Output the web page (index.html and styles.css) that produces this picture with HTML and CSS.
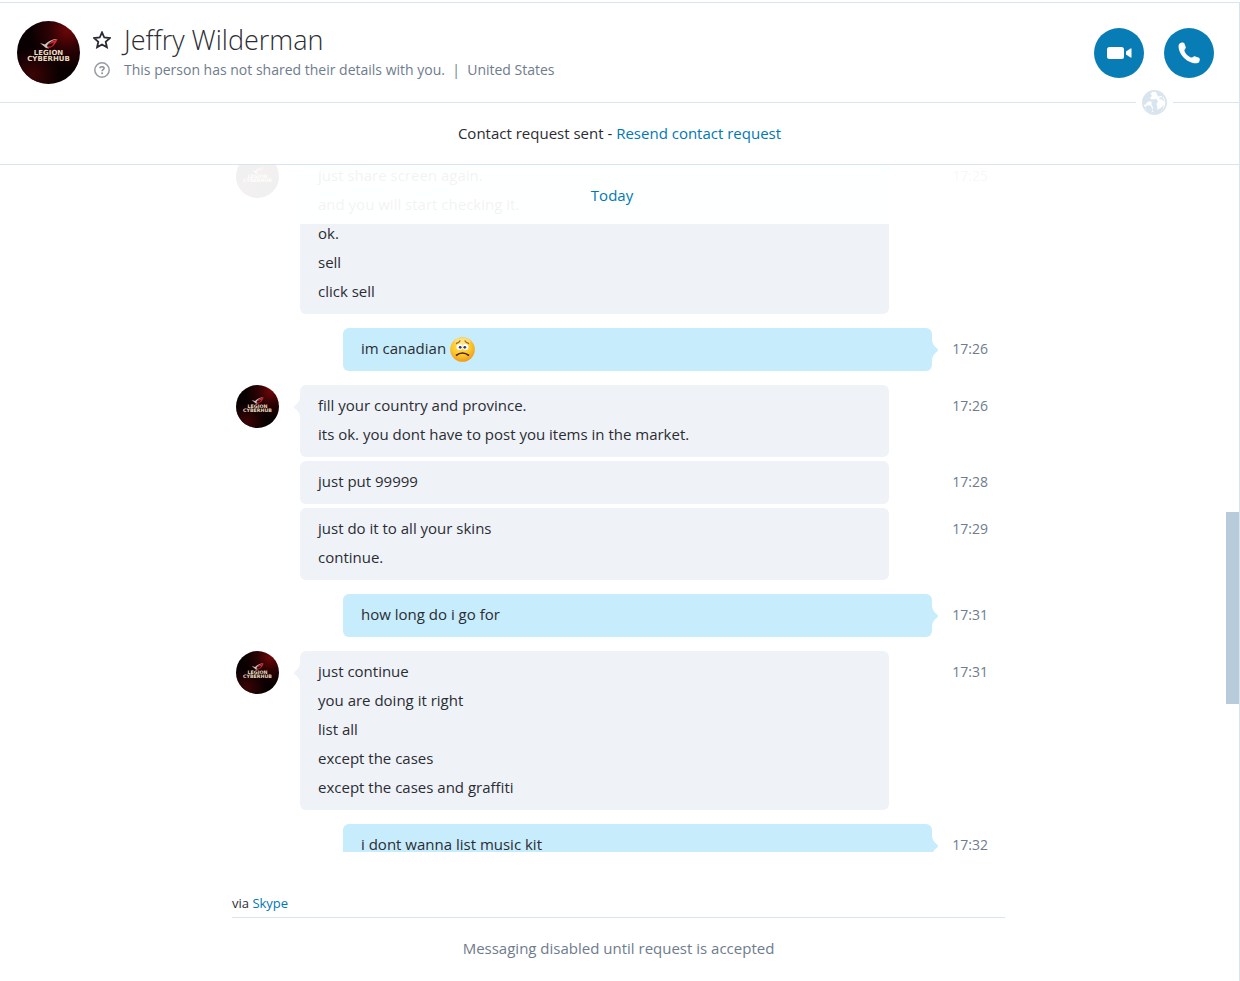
FILE: index.html
```
<!DOCTYPE html>
<html lang="en">
<head>
<meta charset="utf-8">
<title>Jeffry Wilderman</title>
<link rel="stylesheet" href="styles.css">
</head>
<body>
<svg class="defs" aria-hidden="true">
  <defs>
    <radialGradient id="glow" cx="0.8" cy="0.15" r="0.6">
      <stop offset="0" stop-color="#6e0608"/>
      <stop offset="0.5" stop-color="#2c0204"/>
      <stop offset="1" stop-color="#080001"/>
    </radialGradient>
    <radialGradient id="glow-low" cx="0.25" cy="0.85" r="0.45">
      <stop offset="0" stop-color="#3c0405"/>
      <stop offset="1" stop-color="#3c0405" stop-opacity="0"/>
    </radialGradient>
    <radialGradient id="face" cx="0.45" cy="0.35" r="0.65">
      <stop offset="0" stop-color="#ffe35a"/>
      <stop offset="0.6" stop-color="#fdc62c"/>
      <stop offset="1" stop-color="#f09a1c"/>
    </radialGradient>
  </defs>
  <symbol id="logo" viewBox="0 0 63 63">
    <circle cx="31.500" cy="31.500" r="31.500" fill="url(#glow)"/>
    <circle cx="31.500" cy="31.500" r="31.500" fill="url(#glow-low)"/>
    <path d="M23 22l6 5 3 .5-2-2.500C32 21 36 19 41 18c-5 0-10 2-13 5.500z" fill="#c9c4c4"/>
    <path d="M31 24c2-3 6-5 9.500-5.500C38 23 36 27 31 27l-1-1.500h4c1.500-1 2.500-2.500 3-4-2 .5-4 1.500-6 2.500z" fill="#d8262c"/>
    <text x="31.500" y="34" class="logo-text">LEGION</text>
    <text x="31.500" y="40" class="logo-text">CYBERHUB</text>
  </symbol>
  <symbol id="tail" viewBox="0 0 6 20">
    <path d="M0 0Q.5 5 4 7.500Q6 9 6 10Q6 11 4 12.500Q.5 15 0 20z" fill="currentColor"/>
  </symbol>
</svg>

<div class="app">
  <header class="header">
    <svg class="avatar avatar-large" role="img" aria-label="Profile picture"><use href="#logo"/></svg>
    <div class="person">
      <button class="icon-button" aria-label="Add to favourites">
        <svg width="18" height="18" viewBox="0 0 18 18"><path d="M9 1.400l2.300 5.100 5.500.6-4.100 3.700 1.200 5.500L9 13.500l-4.900 2.800 1.200-5.500L1.200 7.100l5.500-.6z" fill="none" stroke="#2b2c33" stroke-width="1.800"/></svg>
      </button>
      <h1 class="name">Jeffry Wilderman</h1>
      <svg class="help" width="18" height="18" viewBox="0 0 18 18" aria-hidden="true"><circle cx="9" cy="9" r="7.200" fill="none" stroke="#959ca3" stroke-width="1.500"/><path d="M6.900 7.300C7 5.100 11.100 5.200 11.100 7.200 11.100 8.600 9.100 8.600 9.100 10.200" fill="none" stroke="#8a9198" stroke-width="1.500"/><circle cx="9.100" cy="12.200" r="1" fill="#8a9198"/></svg>
      <p class="status">This person has not shared their details with you.&nbsp; |&nbsp; United States</p>
    </div>
    <div class="calls">
      <button class="call" aria-label="Video call">
        <svg width="26" height="14" viewBox="0 0 26 14"><rect x="1" y="1" width="17" height="12" rx="2.500" fill="#fff"/><path d="M20 5.500L24.500 2.500Q25.500 2 25.500 3v8q0 1-1 .5L20 8.500z" fill="#fff"/></svg>
      </button>
      <button class="call" aria-label="Call">
        <svg width="22" height="22" viewBox="0 0 22 22"><path d="M1 2.200C2 .5 5.500-.1 6.300 1.200L7.800 5.300C8 6.500 6.300 7.600 6.400 8.700 7.300 11.500 10.500 14.700 13.300 15.600 14.500 15.700 15.500 14 16.700 14.300L21 15.700C22.300 16.300 21.800 18.800 21 20.200 20 21.500 17 21.700 14 20.800 7.500 18.500 3 13.500 1.200 8.200.5 6 .3 3.700 1 2.200z" fill="#fff"/></svg>
      </button>
    </div>
    <span class="globe">
      <svg width="25" height="25" viewBox="0 0 25 25" aria-hidden="true"><circle cx="12.500" cy="12.500" r="11.600" fill="#fff" stroke="#d8e5ee" stroke-width="1.800"/><path d="M1.500 14C0 7 6 1 11.500 1L8.500 3.500 10 6 8 7.500 9 9.500 14.500 9 16 11.500 14.500 14 15.500 18 13.500 21 10.500 21 11 17.500 9.500 14.500 9.500 11.500 6 11.500 3 15zM3 17Q5.500 14.500 8.500 15.500L10.500 19 9.500 23Q5 22 3 17zM13.500 1L19 3.500 22 7 18 7.500 17 9 20 9.500 23 12 21 8 19.500 6 16 6.500zM13 20Q19 19 22 14.500Q21 21 15 23.500L9 23z" fill="#d8e5ee"/></svg>
    </span>
  </header>

  <p class="request">Contact request sent - <a href="#">Resend contact request</a></p>

  <main class="chat">
    <div class="column">
      <h2 class="day">Today</h2>
      <div class="thread">
        <article class="message">
          <svg class="avatar"><use href="#logo"/></svg>
          <div class="bubble"><svg class="tail"><use href="#tail"/></svg>
            <p>just share screen again.</p><p>and you will start checking it.</p><p>ok.</p><p>sell</p><p>click sell</p></div>
          <time>17:25</time>
        </article>
        <article class="message own">
          <div class="bubble"><svg class="tail"><use href="#tail"/></svg>
            <p>im canadian <svg class="emoji" viewBox="0 0 25 25" role="img" aria-label="sad"><circle cx="12.500" cy="12.500" r="12.300" fill="url(#face)"/><ellipse cx="12.500" cy="4.500" rx="8" ry="3.500" fill="#fff" opacity=".35"/><path d="M6 6.500Q9 6 10.300 3.500M19 6.500Q16 6 14.700 3.500" fill="none" stroke="#a5680e" stroke-width="1.400"/><circle cx="9.500" cy="10" r="3" fill="#fff"/><circle cx="15.500" cy="10" r="3" fill="#fff"/><circle cx="10.200" cy="10.300" r="1.400" fill="#27416b"/><circle cx="14.800" cy="10.300" r="1.400" fill="#27416b"/><path d="M6 18.500Q12.500 13.500 19 18.500" fill="none" stroke="#4a2410" stroke-width="1.600"/></svg></p></div>
          <time>17:26</time>
        </article>
        <article class="message">
          <svg class="avatar"><use href="#logo"/></svg>
          <div class="bubble"><svg class="tail"><use href="#tail"/></svg>
            <p>fill your country and province.</p><p>its ok. you dont have to post you items in the market.</p></div>
          <time>17:26</time>
        </article>
        <article class="message follow">
          <div class="bubble"><p>just put 99999</p></div>
          <time>17:28</time>
        </article>
        <article class="message follow">
          <div class="bubble"><p>just do it to all your skins</p><p>continue.</p></div>
          <time>17:29</time>
        </article>
        <article class="message own">
          <div class="bubble"><svg class="tail"><use href="#tail"/></svg><p>how long do i go for</p></div>
          <time>17:31</time>
        </article>
        <article class="message">
          <svg class="avatar"><use href="#logo"/></svg>
          <div class="bubble"><svg class="tail"><use href="#tail"/></svg>
            <p>just continue</p><p>you are doing it right</p><p>list all</p><p>except the cases</p><p>except the cases and graffiti</p></div>
          <time>17:31</time>
        </article>
        <article class="message own">
          <div class="bubble"><svg class="tail"><use href="#tail"/></svg><p>i dont wanna list music kit</p></div>
          <time>17:32</time>
        </article>
      </div>
    </div>
    <div class="scrollbar"></div>
  </main>

  <footer class="footer">
    <p class="via">via <a href="#">Skype</a></p>
    <p class="disabled">Messaging disabled until request is accepted</p>
  </footer>
</div>
</body>
</html>
```
FILE: styles.css
```
* { box-sizing: border-box; }
body, h1, h2, p { margin: 0; font-weight: 400; }
body {
  background: #fff;
  color: #2b2c33;
  font: 15px/29px "Open Sans", "Noto Sans", sans-serif;
}
a { color: #0078b4; text-decoration: none; }
button { border: 0; padding: 0; background: none; cursor: pointer; }
svg { display: block; }
.defs { position: absolute; width: 0; height: 0; }

.app {
  display: flex;
  flex-direction: column;
  height: 100vh;
  border-top: 2px solid #fff;
}
.header, .request, .chat, .footer { border-right: 1px solid #d8e5ee; }

.header {
  position: relative;
  display: flex;
  align-items: center;
  padding: 18px 25px 18px 17px;
  border-top: 1px solid #d8e5ee;
  border-bottom: 1px solid #d8e5ee;
}
.avatar { width: 43px; height: 43px; }
.avatar-large { width: 63px; height: 63px; flex: none; }
.logo-text {
  font: bold 7px "DejaVu Sans", sans-serif;
  fill: #e6dcc0;
  text-anchor: middle;
}
.person {
  flex: 1;
  display: grid;
  grid-template-columns: 18px 1fr;
  column-gap: 13px;
  align-items: center;
  padding: 0 0 2px 13px;
}
.name { font: 300 27px/36px "Open Sans", sans-serif; }
.status { font-size: 14px; line-height: 24px; color: #6e7c8d; }
.calls { display: flex; gap: 20px; }
.call {
  display: grid;
  place-items: center;
  width: 50px;
  height: 50px;
  border-radius: 50%;
  background: #087db5;
}
.globe {
  position: absolute;
  right: 66px;
  bottom: -13px;
  padding: 0 6px;
  background: #fff;
}

.request {
  padding: 16px 0;
  border-bottom: 1px solid #d8e5ee;
  text-align: center;
}

.chat {
  position: relative;
  flex: 1;
  min-height: 0;
  padding-right: 2px;
  overflow: hidden;
}
.column, .footer > p { max-width: 773px; margin: 0 auto; }
.column { display: flow-root; position: relative; padding-right: 13px; }
.day {
  position: absolute;
  z-index: 1;
  top: 0;
  left: 0;
  right: 13px;
  padding: 16px 0 14px;
  background: rgba(255, 255, 255, 0.94);
  color: #0078b4;
  font-size: 15px;
  text-align: center;
}
.thread {
  display: flex;
  flex-direction: column;
  gap: 14px;
  margin-top: -10px;
  padding: 0 4px;
}
.message { display: grid; grid-template-columns: 64px 1fr 99px; }
.message .bubble { grid-column: 2; }
.message.own { grid-template-columns: 107px 1fr 56px; }
.message.follow { margin-top: -10px; }
.bubble {
  position: relative;
  padding: 6px 18px 8px;
  border-radius: 6px;
  background: #eff3f8;
  color: #eff3f8;
}
.own .bubble { background: #c7ecfc; color: #c7ecfc; }
.bubble p { height: 29px; color: #2b2c33; }
.tail {
  position: absolute;
  top: 12px;
  left: -6px;
  width: 6px;
  height: 20px;
  transform: scaleX(-1);
}
.own .tail { left: 100%; transform: none; }
.emoji { display: inline-block; width: 25px; height: 25px; vertical-align: middle; }
time {
  padding-top: 6px;
  color: #6e7c8d;
  font-size: 14px;
  text-align: right;
}
.scrollbar {
  position: absolute;
  top: 347px;
  right: 0;
  width: 13px;
  height: 192px;
  background: #b7cbdb;
}

.footer { padding: 39px 2px 18px 0; }
.footer .via {
  padding-bottom: 1px;
  border-bottom: 1px solid #d8e5ee;
  font-size: 13px;
  line-height: 25px;
}
.footer .disabled { padding-top: 16px; color: #6e7c8d; text-align: center; }
```
